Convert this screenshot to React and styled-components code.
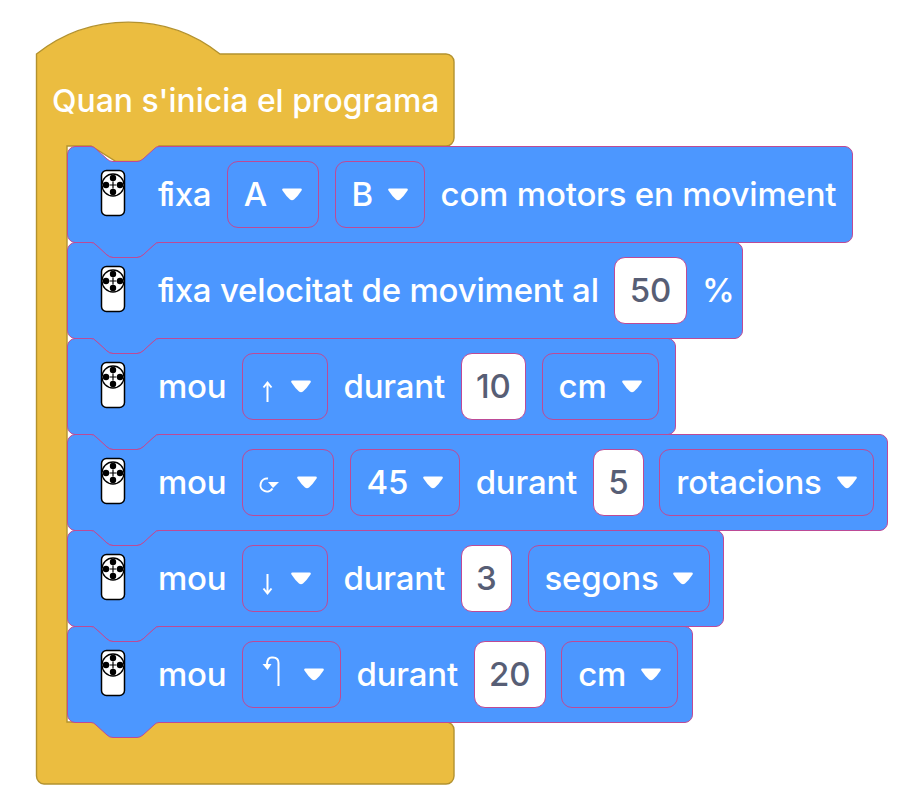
import React from "react";
import styled, { createGlobalStyle } from "styled-components";

const BLUE = "#4c97ff";
const PINK = "#bd4a96";
const YELLOW = "#ebbd40";
const YELLOW_LINE = "#b3922f";

const GlobalStyle = createGlobalStyle`
  html, body {
    margin: 0;
    background: #fff;
  }
  body {
    font-family: "Inter", "Liberation Sans", sans-serif;
  }
`;

const Page = styled.div`
  width: 904px;
  height: 800px;
  box-sizing: border-box;
  padding: 22px 0 0 36px;
`;

const Stack = styled.div`
  position: relative;
  display: flex;
  flex-direction: column;
  height: 763px;
`;

const StackShape = styled.svg`
  position: absolute;
  left: 0;
  top: 0;
  overflow: visible;
`;

const HatRow = styled.div`
  position: relative;
  display: flex;
  align-items: center;
  height: 92px;
  margin-top: 32px;
  padding-left: 16px;
  color: #fff;
  font-size: 31.9px;
  font-weight: 500;
`;

const Body = styled.div`
  position: relative;
  display: flex;
  flex-direction: column;
  padding-left: 31px;
`;

const BlockWrap = styled.div`
  position: relative;
  display: flex;
  align-items: center;
  gap: 15.5px;
  box-sizing: border-box;
  width: ${(props) => props.$width}px;
  height: 96px;
  padding-left: 33px;
  color: #fff;
  font-size: 33px;
  font-weight: 500;
  letter-spacing: -0.2px;
`;

const BlockShape = styled.svg`
  position: absolute;
  left: 0;
  top: 0;
  overflow: visible;
`;

const Label = styled.span`
  position: relative;
  white-space: nowrap;
`;

// the f and i sit as a ligature in the reference
const TightF = styled.span`
  letter-spacing: -4px;
`;

const Remote = styled.svg`
  position: relative;
  flex: none;
  margin: -2px 16.5px 0 0;
`;

const Dropdown = styled.div`
  position: relative;
  display: flex;
  align-items: center;
  gap: 15px;
  box-sizing: border-box;
  height: 67px;
  padding: 0 16px;
  border: 1px solid ${PINK};
  border-radius: 11px;
  background: ${BLUE};
`;

const NumberInput = styled.div`
  position: relative;
  display: flex;
  align-items: center;
  box-sizing: border-box;
  height: 67px;
  padding: 0 14.5px;
  border: 1px solid ${PINK};
  border-radius: 11px;
  background: #fff;
  color: #575e75;
`;

const Caret = styled.svg`
  flex: none;
`;

const Glyph = styled.svg`
  flex: none;
`;

const blockPath = (w, h) => {
  const r = 8;
  return [
    `M0.5 ${r}`,
    `A${r} ${r} 0 0 1 ${r} 0.5`,
    "H24 Q27 0.5 29 3 L40 13 Q42.5 15.5 46 15.5 H70 Q73 15.5 76 13 L87 3 Q89 0.5 92 0.5",
    `H${w - r}`,
    `A${r} ${r} 0 0 1 ${w - 0.5} ${r}`,
    `V${h - r}`,
    `A${r} ${r} 0 0 1 ${w - r} ${h + 0.5}`,
    `H92 Q89 ${h + 0.5} 87 ${h + 3} L76 ${h + 13} Q73 ${h + 15.5} 70 ${h + 15.5} H46 Q42.5 ${h + 15.5} 40 ${h + 13} L29 ${h + 3} Q27 ${h + 0.5} 24 ${h + 0.5}`,
    `H${r}`,
    `A${r} ${r} 0 0 1 0.5 ${h - r}`,
    "Z",
  ].join(" ");
};

function RemoteIcon() {
  return (
    <Remote width="26" height="48" viewBox="0 0 26 48">
      <rect x="1.5" y="1.5" width="23" height="45" rx="5" fill="#fff" stroke="#000" strokeWidth="1.5" />
      <circle cx="13" cy="16" r="11" fill="#fff" stroke="#000" strokeWidth="1.3" />
      <circle cx="13" cy="9" r="3.2" fill="#000" />
      <circle cx="13" cy="23" r="3.2" fill="#000" />
      <circle cx="6" cy="16" r="3.2" fill="#000" />
      <circle cx="20" cy="16" r="3.2" fill="#000" />
      <path d="M13 12.5V19.5M9.5 16H16.5" stroke="#000" strokeWidth="1.2" />
    </Remote>
  );
}

function CaretIcon() {
  return (
    <Caret width="20" height="13" viewBox="0 0 20 13">
      <path d="M1.5 0.5H18.5Q20.5 0.5 19.5 2.5Q16 8 12 11.5Q10 13 8 11.5Q4 8 0.5 2.5Q-0.5 0.5 1.5 0.5Z" fill="#fff" />
    </Caret>
  );
}

const UpArrow = () => (
  <Glyph width="17" height="36" viewBox="0 0 17 36">
    <path d="M8.5 34V15M4.5 19.5L8.5 14.5L12.5 19.5" fill="none" stroke="#fff" strokeWidth="2" />
  </Glyph>
);

const DownArrow = () => (
  <Glyph width="17" height="36" viewBox="0 0 17 36">
    <path d="M8.5 14V33M4.5 28.5L8.5 33.5L12.5 28.5" fill="none" stroke="#fff" strokeWidth="2" />
  </Glyph>
);

const RotateArrow = () => (
  <Glyph width="23" height="36" viewBox="0 0 23 36">
    <path d="M13.5 24.5A6.5 6.5 0 1 1 9 14.6" fill="none" stroke="#fff" strokeWidth="2" />
    <path d="M9 18H20L14 24Z" fill="#fff" />
  </Glyph>
);

const TurnLeftArrow = () => (
  <Glyph width="30" height="36" viewBox="0 0 30 36">
    <path d="M19.5 30V7Q19.5 1.5 14 1.5H12.5Q8.5 1.5 8 8" fill="none" stroke="#fff" strokeWidth="2" />
    <path d="M3.5 8H12.5L8.5 14Z" fill="#fff" />
  </Glyph>
);

function Block({ width, children }) {
  return (
    <BlockWrap $width={width}>
      <BlockShape width={width} height="96">
        <path d={blockPath(width, 96)} fill={BLUE} stroke={PINK} strokeWidth="1" />
      </BlockShape>
      <RemoteIcon />
      {children}
    </BlockWrap>
  );
}

function Drop({ children }) {
  return (
    <Dropdown>
      {children}
      <CaretIcon />
    </Dropdown>
  );
}

// the hat and its C-shaped arm; the tab under the header sits in the first block's notch
const hatPath =
  "M0.5 32 A148 148 0 0 1 184 32 H410 A8 8 0 0 1 418 40 V116 A8 8 0 0 1 410 124 H123 L112 139.5 H80 L55 124 H31 V700 H410 A8 8 0 0 1 418 708 V754 A8 8 0 0 1 410 762 H8 A8 8 0 0 1 0.5 754 Z";

export default function App() {
  return (
    <Page>
      <GlobalStyle />
      <Stack>
        <StackShape width="419" height="763">
          <path d={hatPath} fill={YELLOW} stroke={YELLOW_LINE} strokeWidth="1.4" />
        </StackShape>
        <HatRow>
          <Label>Quan s'inicia el programa</Label>
        </HatRow>
        <Body>
          <Block width={786}>
            <Label><TightF>f</TightF>ixa</Label>
            <Drop><Label>A</Label></Drop>
            <Drop><Label>B</Label></Drop>
            <Label>com motors en moviment</Label>
          </Block>
          <Block width={676}>
            <Label><TightF>f</TightF>ixa velocitat de moviment al</Label>
            <NumberInput>50</NumberInput>
            <Label>%</Label>
          </Block>
          <Block width={609}>
            <Label>mou</Label>
            <Drop><UpArrow /></Drop>
            <Label>durant</Label>
            <NumberInput>10</NumberInput>
            <Drop><Label>cm</Label></Drop>
          </Block>
          <Block width={821}>
            <Label>mou</Label>
            <Drop><RotateArrow /></Drop>
            <Drop><Label>45</Label></Drop>
            <Label>durant</Label>
            <NumberInput>5</NumberInput>
            <Drop><Label>rotacions</Label></Drop>
          </Block>
          <Block width={657}>
            <Label>mou</Label>
            <Drop><DownArrow /></Drop>
            <Label>durant</Label>
            <NumberInput>3</NumberInput>
            <Drop><Label>segons</Label></Drop>
          </Block>
          <Block width={626}>
            <Label>mou</Label>
            <Drop><TurnLeftArrow /></Drop>
            <Label>durant</Label>
            <NumberInput>20</NumberInput>
            <Drop><Label>cm</Label></Drop>
          </Block>
        </Body>
      </Stack>
    </Page>
  );
}
